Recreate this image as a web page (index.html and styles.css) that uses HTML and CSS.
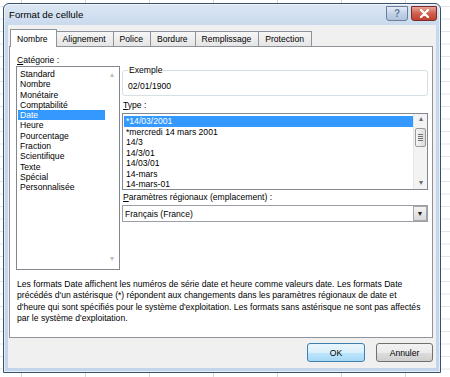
FILE: index.html
```html
<!DOCTYPE html>
<html lang="fr">
<head>
    <meta charset="UTF-8">
    <title>Format de cellule</title>
    <link rel="stylesheet" href="styles.css">
</head>
<body>
    <div class="window">
        <div class="titlebar">
            <span class="title">Format de cellule</span>
            <div class="caption">
                <span class="cap-btn help">?</span>
                <span class="cap-btn close">
                    <svg width="11" height="9" viewBox="0 0 11 9"><path d="M2 1 L9 8 M9 1 L2 8" stroke="#fff" stroke-width="2.2" stroke-linecap="round"/></svg>
                </span>
            </div>
        </div>

        <div class="client">
            <div class="tabs">
                <span class="tab active">Nombre</span>
                <span class="tab">Alignement</span>
                <span class="tab">Police</span>
                <span class="tab">Bordure</span>
                <span class="tab">Remplissage</span>
                <span class="tab">Protection</span>
            </div>

            <div class="panel">
                <div class="panel-body">
                    <div class="cat-col">
                        <div class="label"><u>C</u>atégorie :</div>
                        <div class="listbox cat-list">
                            <ul class="items">
                                <li>Standard</li>
                                <li>Nombre</li>
                                <li>Monétaire</li>
                                <li>Comptabilité</li>
                                <li class="selected">Date</li>
                                <li>Heure</li>
                                <li>Pourcentage</li>
                                <li>Fraction</li>
                                <li>Scientifique</li>
                                <li>Texte</li>
                                <li>Spécial</li>
                                <li>Personnalisée</li>
                            </ul>
                            <div class="scroll off">
                                <span class="arrow">&#9652;</span>
                                <span class="arrow">&#9662;</span>
                            </div>
                        </div>
                    </div>

                    <div class="right-col">
                        <fieldset class="sample">
                            <legend>Exemple</legend>
                            <div class="sample-value">02/01/1900</div>
                        </fieldset>

                        <div class="label type-label"><u>T</u>ype :</div>
                        <div class="listbox type-list">
                            <ul class="items">
                                <li class="selected">*14/03/2001</li>
                                <li>*mercredi 14 mars 2001</li>
                                <li>14/3</li>
                                <li>14/3/01</li>
                                <li>14/03/01</li>
                                <li>14-mars</li>
                                <li>14-mars-01</li>
                            </ul>
                            <div class="scroll">
                                <span class="arrow">&#9652;</span>
                                <span class="thumb"><i></i><i></i><i></i><i></i></span>
                                <span class="arrow bottom">&#9662;</span>
                            </div>
                        </div>

                        <div class="label locale-label"><u>P</u>aramètres régionaux (emplacement) :</div>
                        <div class="select">
                            <span>Français (France)</span>
                            <span class="drop">&#9660;</span>
                        </div>
                    </div>
                </div>

                <p class="desc">
                    Les formats Date affichent les numéros de série date et heure comme valeurs date. Les formats Date<br>
                    précédés d'un astérisque (*) répondent aux changements dans les paramètres régionaux de date et<br>
                    d'heure qui sont spécifiés pour le système d'exploitation. Les formats sans astérisque ne sont pas affectés<br>
                    par le système d'exploitation.
                </p>
            </div>

            <div class="footer">
                <button class="btn default">OK</button>
                <button class="btn">Annuler</button>
            </div>
        </div>
    </div>
</body>
</html>
```

FILE: styles.css
```css
* {
    box-sizing: border-box;
    margin: 0;
}

body {
    margin: 0;
    height: 377px;
    overflow: hidden;
    font-family: "Liberation Sans", Arial, sans-serif;
    font-size: 8.6px;
    color: #000;
    background-color: #fff;
    background-image:
        linear-gradient(to right, #d6d8db 1px, transparent 1px),
        linear-gradient(to bottom, #e1e3e6 1px, transparent 1px);
    background-size: 64px 100%, 100% 12.5px;
    background-position: 21px 0, 0 6px;
}

.window {
    margin: 3px 0 0 3px;
    width: 438px;
    height: 370px;
    border: 1px solid #36516a;
    border-radius: 6px 6px 0 0;
    background: linear-gradient(#dbe6f3, #c6d8ec 25px, #c3d5ea);
    padding: 0 4px 4px 4px;
    display: flex;
    flex-direction: column;
    box-shadow: 0 0 0 1px rgba(255, 255, 255, 0.6) inset;
}

.titlebar {
    height: 21px;
    display: flex;
    align-items: center;
    justify-content: space-between;
}

.title {
    font-size: 9.7px;
    padding-left: 1px;
}

.caption {
    display: flex;
    gap: 3px;
    align-self: flex-start;
    margin-top: 2px;
    margin-right: -1px;
}

.cap-btn {
    height: 15px;
    border: 1px solid #6d7f95;
    border-radius: 0 0 3px 3px;
    display: flex;
    align-items: center;
    justify-content: center;
}

.help {
    width: 22px;
    background: linear-gradient(#e4ecf6, #c2d3e7 50%, #aec3dc);
    color: #6a7d96;
    font-weight: bold;
    font-size: 10px;
}

.close {
    width: 26px;
    border-color: #7d2b2b;
    background: linear-gradient(#e8a497, #d0604f 50%, #c0402f);
}

.client {
    flex: 1;
    background: #f0f0f0;
    padding: 4px 3px 0 1px;
    display: flex;
    flex-direction: column;
}

.tabs {
    display: flex;
    align-items: flex-end;
    height: 17px;
    padding-left: 1px;
}

.tab {
    height: 15px;
    padding: 0 7px 0 6px;
    border: 1px solid #8e9299;
    border-bottom: none;
    margin-right: -1px;
    background: linear-gradient(#f6f6f6, #e5e5e5);
    display: flex;
    align-items: center;
}

.tab.active {
    height: 18px;
    margin-bottom: -1px;
    padding: 0 8px 0 6px;
    background: #fff;
    position: relative;
    z-index: 1;
}

.panel {
    height: 292px;
    border: 1px solid #8e9299;
    background: #fff;
    padding: 7px 4px 0 6px;
}

.panel-body {
    display: grid;
    grid-template-columns: 104px 1fr;
    column-gap: 2px;
}

.label {
    height: 12px;
    line-height: 12px;
    padding-left: 1px;
}

.listbox {
    border: 1px solid #828790;
    background: #fff;
    display: flex;
}

.items {
    list-style: none;
    padding: 2px 0 0 1px;
    flex: 1;
    line-height: 10.3px;
}

.items li {
    padding-left: 2px;
    white-space: nowrap;
}

.items li.selected {
    background: #3399ff;
    color: #fff;
}

.cat-list {
    height: 204px;
}

.cat-list .items {
    padding-top: 2px;
}

.type-list .items {
    line-height: 10.5px;
}

.scroll {
    width: 14px;
    display: flex;
    flex-direction: column;
    align-items: center;
    position: relative;
    background: #f3f3f3;
    border-left: 1px solid #e6e6e6;
}

.scroll.off {
    background: #fff;
    border-left: none;
    justify-content: space-between;
    padding: 3px 0 5px;
}

.arrow {
    font-size: 8px;
    line-height: 10px;
    color: #6b6b6b;
}

.scroll.off .arrow {
    color: #bdbdbd;
}

.arrow.bottom {
    margin-top: auto;
    margin-bottom: 1px;
}

.thumb {
    width: 11px;
    height: 19px;
    margin-top: 4px;
    border: 1px solid #9a9a9a;
    border-radius: 2px;
    background: linear-gradient(to right, #f4f4f4, #dcdcdc);
    display: flex;
    flex-direction: column;
    justify-content: center;
    align-items: center;
    gap: 1px;
}

.thumb i {
    width: 5px;
    height: 1px;
    background: #707070;
}

.right-col {
    padding-top: 11px;
}

.sample {
    border: 1px solid #d5dfe5;
    border-radius: 3px;
    padding: 0 5px 2px 5px;
    height: 31px;
}

.sample legend {
    padding: 0 1px;
    line-height: 10px;
}

.sample-value {
    line-height: 11px;
    margin-top: 6px;
}

.type-label {
    margin-top: 3px;
    margin-bottom: 2px;
}

.type-list {
    height: 77px;
}

.locale-label {
    margin-top: 1px;
    margin-bottom: 2px;
}

.select {
    height: 17px;
    border: 1px solid #9a9fa7;
    display: flex;
    align-items: center;
    justify-content: space-between;
    padding-left: 2px;
}

.drop {
    width: 14px;
    height: 15px;
    border: 1px solid #a7a7a7;
    background: linear-gradient(#f4f4f4, #d8d8d8);
    font-size: 7px;
    display: flex;
    align-items: center;
    justify-content: center;
    color: #202020;
}

.desc {
    margin-top: 9px;
    padding-left: 1px;
    line-height: 11.3px;
    white-space: nowrap;
}

.footer {
    display: flex;
    justify-content: flex-end;
    gap: 11px;
    padding-top: 5px;
}

.btn {
    height: 19px;
    width: 57px;
    font-family: inherit;
    font-size: 8.6px;
    color: #000;
    border: 1px solid #707070;
    border-radius: 3px;
    background: linear-gradient(#f2f2f2, #ebebeb 50%, #dddddd 50%, #cfcfcf);
    padding: 0;
}

.btn.default {
    width: 58px;
    border-color: #3c7fb1;
    background: linear-gradient(#eaf6fd, #d9f0fc 50%, #bee6fd 50%, #a7d9f5);
}
```
